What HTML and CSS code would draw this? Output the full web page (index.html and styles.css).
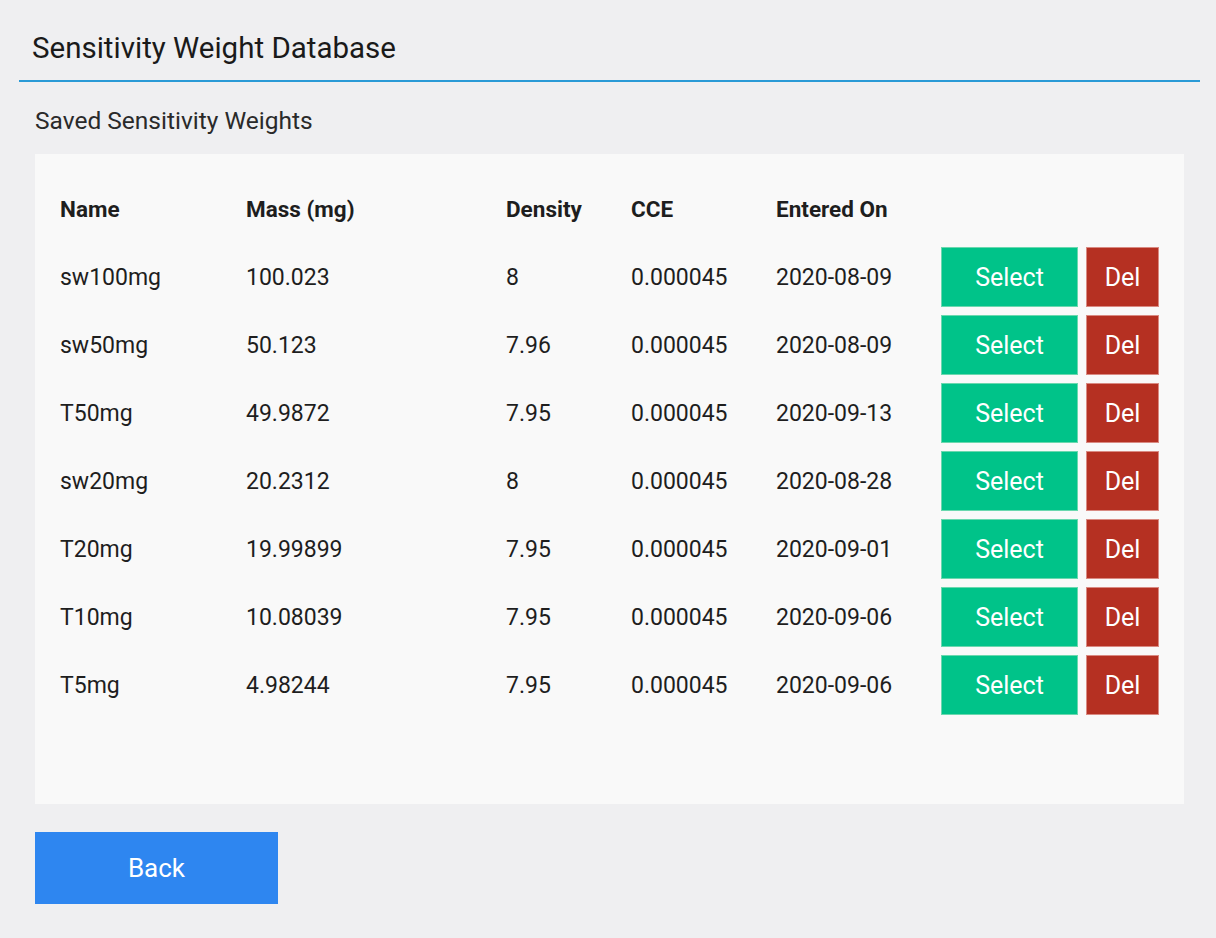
FILE: index.html
```html
<!DOCTYPE html>
<html>
<head>
<meta charset="utf-8">
<link rel="stylesheet" href="styles.css">
</head>
<body>
<div class="page">
  <header class="topbar">
    <h1 class="title">Sensitivity Weight Database</h1>
  </header>
  <h2 class="subtitle">Saved Sensitivity Weights</h2>
  <section class="panel">
    <div class="grid">
      <div class="row head">
        <div>Name</div><div>Mass (mg)</div><div>Density</div><div>CCE</div><div>Entered On</div><div></div>
      </div>
      <div class="row"><div>sw100mg</div><div>100.023</div><div>8</div><div>0.000045</div><div>2020-08-09</div><div class="actions"><button class="btn sel">Select</button><button class="btn del">Del</button></div></div>
      <div class="row"><div>sw50mg</div><div>50.123</div><div>7.96</div><div>0.000045</div><div>2020-08-09</div><div class="actions"><button class="btn sel">Select</button><button class="btn del">Del</button></div></div>
      <div class="row"><div>T50mg</div><div>49.9872</div><div>7.95</div><div>0.000045</div><div>2020-09-13</div><div class="actions"><button class="btn sel">Select</button><button class="btn del">Del</button></div></div>
      <div class="row"><div>sw20mg</div><div>20.2312</div><div>8</div><div>0.000045</div><div>2020-08-28</div><div class="actions"><button class="btn sel">Select</button><button class="btn del">Del</button></div></div>
      <div class="row"><div>T20mg</div><div>19.99899</div><div>7.95</div><div>0.000045</div><div>2020-09-01</div><div class="actions"><button class="btn sel">Select</button><button class="btn del">Del</button></div></div>
      <div class="row"><div>T10mg</div><div>10.08039</div><div>7.95</div><div>0.000045</div><div>2020-09-06</div><div class="actions"><button class="btn sel">Select</button><button class="btn del">Del</button></div></div>
      <div class="row"><div>T5mg</div><div>4.98244</div><div>7.95</div><div>0.000045</div><div>2020-09-06</div><div class="actions"><button class="btn sel">Select</button><button class="btn del">Del</button></div></div>
    </div>
  </section>
  <button class="back">Back</button>
</div>
</body>
</html>
```
FILE: styles.css
```css
html, body {
  margin: 0;
  padding: 0;
  background: #efeff1;
  font-family: Roboto, "Liberation Sans", sans-serif;
  color: #1c1c1c;
}
.page {
  width: 1216px;
  height: 938px;
  box-sizing: border-box;
  padding: 0 16px 0 19px;
}
.topbar {
  height: 80px;
  border-bottom: 2px solid #2a9ad6;
  display: flex;
  align-items: center;
  padding-left: 13px;
}
.title {
  margin: 0;
  margin-top: 15px;
  font-size: 29.5px;
  font-weight: 400;
  color: #1a1a1a;
}
.subtitle {
  margin: 0;
  height: 72px;
  display: flex;
  align-items: center;
  padding-left: 16px;
  padding-top: 4px;
  box-sizing: border-box;
  font-size: 24.5px;
  font-weight: 400;
  color: #2a2a2a;
}
.panel {
  margin-left: 16px;
  width: 1149px;
  height: 650px;
  box-sizing: border-box;
  background: #f9f9f9;
  padding: 21px 0 0 25px;
}
.row {
  display: grid;
  grid-template-columns: 186px 260px 125px 145px 165px auto;
  align-items: center;
  height: 68px;
  font-size: 23px;
  color: #1e1e1e;
}
.row.head {
  font-weight: 700;
  font-size: 22.5px;
}
.actions {
  display: flex;
  gap: 8px;
}
.btn {
  height: 60px;
  border: none;
  font-family: Roboto, "Liberation Sans", sans-serif;
  font-size: 25px;
  color: #fff;
  padding: 0;
}
.sel {
  width: 137px;
  background: #00c389;
  box-shadow: inset 0 0 0 1px #6ad8ae;
}
.del {
  width: 73px;
  background: #b53022;
  box-shadow: inset 0 0 0 1px #d98a82;
}
.back {
  display: block;
  margin: 28px 0 0 16px;
  width: 243px;
  height: 72px;
  border: none;
  background: #2e86f0;
  color: #fff;
  font-family: Roboto, "Liberation Sans", sans-serif;
  font-size: 26px;
}
```
